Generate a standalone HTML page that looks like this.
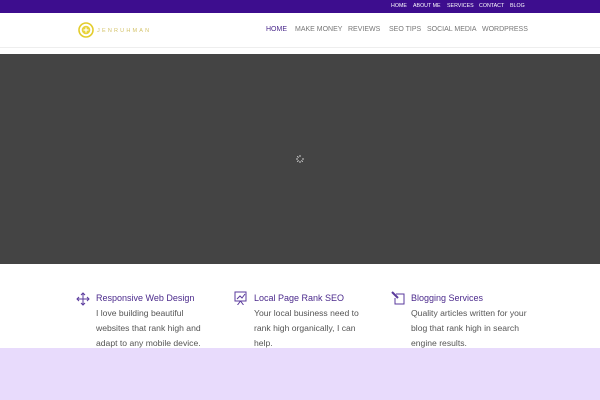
<!DOCTYPE html>
<html><head><style>
*{margin:0;padding:0;box-sizing:border-box}
body{width:600px;height:400px;overflow:hidden;background:#fff;font-family:"Liberation Sans",sans-serif;position:relative}
.top{position:absolute;left:0;top:0;width:600px;height:13px;background:#3d0d8e}
.top span{position:absolute;top:3px;font-size:5.3px;color:#fff}
.hdr{position:absolute;top:13px;left:0;width:600px;height:35px;background:#fff;border-bottom:1px solid #eee}
.nav{position:absolute;top:26px;font-size:7px;color:#777;white-space:nowrap}
.slider{position:absolute;top:54px;left:0;width:600px;height:210px;background:#444}
.col{position:absolute;top:292px;width:150px}
.col h3{font-weight:normal;font-size:9px;color:#4b2a8c;height:15px;line-height:12px}
.col p{font-size:8.6px;color:#555;line-height:15px;margin-top:-1px}
.ico{position:absolute;top:292px}
.foot{position:absolute;top:348px;left:0;width:600px;height:52px;background:#e8dbfc}
</style></head><body>
<div class="top">
<span style="left:391px">HOME</span><span style="left:413px">ABOUT ME</span><span style="left:447px">SERVICES</span><span style="left:479px">CONTACT</span><span style="left:510px">BLOG</span>
</div>
<div class="hdr">
<svg style="position:absolute;left:78px;top:9px" width="16" height="16" viewBox="0 0 16 16"><circle cx="8" cy="8" r="7" fill="none" stroke="#e3cc2a" stroke-width="1.6"/><circle cx="8" cy="8" r="4.3" fill="#e8d33a"/><path d="M8 5.5v5M5.5 8h5" stroke="#fff" stroke-width="1.2"/></svg>
<span style="position:absolute;left:97px;top:15px;font-size:5.5px;letter-spacing:2.2px;color:#d4c36a">JENRUHMAN</span>
</div>
<span class="nav" style="left:266px;color:#4b2a8c">HOME</span>
<span class="nav" style="left:295px">MAKE MONEY</span>
<span class="nav" style="left:348px">REVIEWS</span>
<span class="nav" style="left:389px">SEO TIPS</span>
<span class="nav" style="left:427px">SOCIAL MEDIA</span>
<span class="nav" style="left:482px">WORDPRESS</span>
<div class="slider">
<svg style="position:absolute;left:296px;top:101px" width="8" height="8" viewBox="0 0 8 8"><g stroke="#ccc" stroke-width="1"><path d="M4 0v2M4 6v2M0 4h2M6 4h2M1.2 1.2l1.4 1.4M5.4 5.4l1.4 1.4M1.2 6.8l1.4-1.4"/></g></svg>
</div>
<svg class="ico" style="left:76px;top:292px" width="14" height="14" viewBox="0 0 14 14" fill="none" stroke="#5a3a9c" stroke-width="1"><path d="M7 1v12M1 7h12M5 3l2-2 2 2M5 11l2 2 2-2M3 5L1 7l2 2M11 5l2 2-2 2"/></svg>
<svg class="ico" style="left:234px;top:291px" width="13" height="14" viewBox="0 0 13 14" fill="none" stroke="#5a3a9c" stroke-width="1"><rect x="1" y="1" width="11" height="9"/><path d="M3 8l3-3 2 2 3-4M6.5 10l-3 4M6.5 10l3 4"/></svg>
<svg class="ico" style="left:391px;top:291px" width="14" height="14" viewBox="0 0 14 14" fill="none" stroke="#5a3a9c" stroke-width="1"><path d="M5 3h8v10H4V7"/><path d="M1 1l6 6" stroke-width="2"/></svg>
<div class="col" style="left:96px"><h3>Responsive Web Design</h3><p>I love building beautiful<br>websites that rank high and<br>adapt to any mobile device.</p></div>
<div class="col" style="left:254px"><h3>Local Page Rank SEO</h3><p>Your local business need to<br>rank high organically, I can<br>help.</p></div>
<div class="col" style="left:411px"><h3>Blogging Services</h3><p>Quality articles written for your<br>blog that rank high in search<br>engine results.</p></div>
<div class="foot"></div>
</body></html>
